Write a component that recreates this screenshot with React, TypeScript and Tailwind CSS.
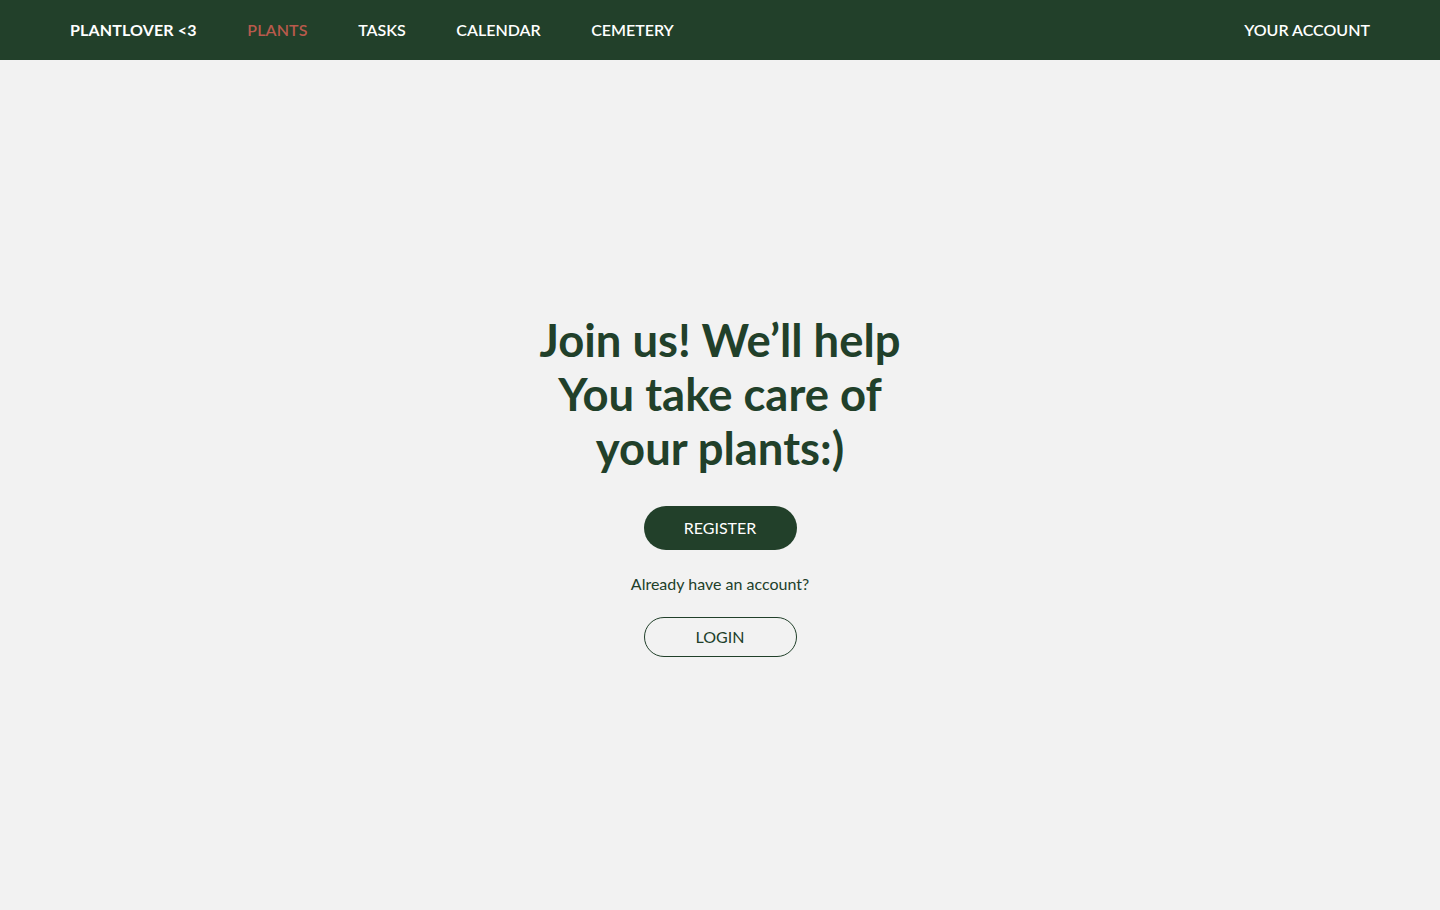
export default function App() {
  return (
    <div className="flex flex-col h-screen w-full bg-[#f2f2f2] font-['Lato','Liberation_Sans',sans-serif]">
      <header className="flex items-center justify-between h-[60px] px-[70px] bg-[#22402a] text-white text-[16px]">
        <nav className="flex items-center gap-[50.5px]">
          <span className="font-bold tracking-[0.15px]">PLANTLOVER &lt;3</span>
          <span className="font-semibold text-[#b85a4c] tracking-[0.15px]">PLANTS</span>
          <span className="font-semibold">TASKS</span>
          <span className="font-semibold">CALENDAR</span>
          <span className="font-semibold">CEMETERY</span>
        </nav>
        <span className="font-semibold">YOUR ACCOUNT</span>
      </header>
      <main className="flex flex-1 flex-col items-center justify-center text-[#21402a]">
        <h1 className="text-center font-bold text-[45.4px] leading-[54px]">
          Join us! We’ll help
          <br />
          You take care of
          <br />
          your plants:)
        </h1>
        <button className="mt-[31px] w-[153px] h-[44px] rounded-full bg-[#22402a] text-white text-[16px]">
          REGISTER
        </button>
        <p className="mt-[24px] text-[16px] leading-[20px]">Already have an account?</p>
        <button className="mt-[23px] w-[153px] h-[40px] rounded-full border border-[#21402a] text-[16px]">
          LOGIN
        </button>
      </main>
    </div>
  );
}
